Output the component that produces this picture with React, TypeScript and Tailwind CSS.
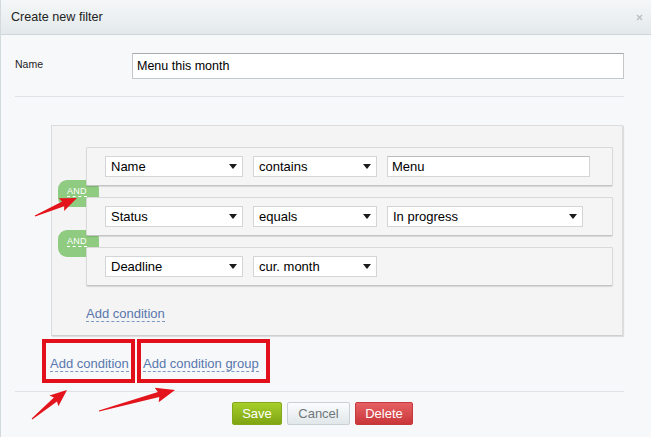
import React from "react";

type P = [number, number];

function arrowPoints(t: P, p: P, L: number, W: number, w0: number, w1: number): string {
  const dx = p[0] - t[0];
  const dy = p[1] - t[1];
  const len = Math.hypot(dx, dy);
  const ux = dx / len;
  const uy = dy / len;
  const nx = -uy;
  const ny = ux;
  const N: P = [p[0] - ux * L, p[1] - uy * L];
  const pts: P[] = [
    [t[0] + (nx * w0) / 2, t[1] + (ny * w0) / 2],
    [N[0] + (nx * w1) / 2, N[1] + (ny * w1) / 2],
    [N[0] - ux * 2 + (nx * W) / 2, N[1] - uy * 2 + (ny * W) / 2],
    p,
    [N[0] - ux * 2 - (nx * W) / 2, N[1] - uy * 2 - (ny * W) / 2],
    [N[0] - (nx * w1) / 2, N[1] - (ny * w1) / 2],
    [t[0] - (nx * w0) / 2, t[1] - (ny * w0) / 2],
  ];
  return pts.map((q) => `${q[0].toFixed(1)},${q[1].toFixed(1)}`).join(" ");
}

function Caret() {
  return (
    <svg width="8" height="5" viewBox="0 0 8 5" className="shrink-0">
      <path d="M0 0 H8 L4 5 Z" fill="#1a1a1a" />
    </svg>
  );
}

function Select({ label, className }: { label: string; className: string }) {
  return (
    <div
      className={
        "flex h-[21px] items-center justify-between border border-[#d3d6d8] bg-white pl-[5px] pr-[5px] text-[13px] leading-none text-black " +
        className
      }
    >
      <span>{label}</span>
      <Caret />
    </div>
  );
}

function TextBox({ value, className }: { value: string; className: string }) {
  return (
    <div
      className={
        "flex h-[21px] items-center border border-[#d3d6d8] border-t-[#b9bdc0] bg-white pl-[4px] text-[13px] leading-none text-black " +
        className
      }
    >
      {value}
    </div>
  );
}

function AndBadge() {
  return (
    <div className="absolute left-[-29px] top-[-18px] -z-10 flex h-[27px] w-[41px] items-start rounded-[9px] bg-[#8fcb80] pl-[9px] pt-[6px]">
      <span className="block w-[20px] border-b border-dashed border-white text-[9px] leading-[10px] tracking-[0.3px] text-white">
        AND
      </span>
    </div>
  );
}

function Row({ children, badge }: { children: React.ReactNode; badge?: boolean }) {
  return (
    <div className="relative flex h-[39px] items-center gap-[10px] rounded-[2px] border border-[#d9d9d9] border-b-[#c4c4c4] bg-[#f5f5f5] pl-[18px] shadow-[0_1px_1px_rgba(0,0,0,0.12)]">
      {badge && <AndBadge />}
      {children}
    </div>
  );
}

function DashLink({ text }: { text: string }) {
  return (
    <span className="block border-b border-dashed border-[#7b98c4] text-[13px] leading-[15px] text-[#5877ad]">
      {text}
    </span>
  );
}

export default function App() {
  return (
    <div className="relative h-[437px] w-[651px] overflow-hidden border-l border-[#d3dadd] bg-[#f7f8fa] font-['Liberation_Sans',Arial,sans-serif]">
      {/* header */}
      <div className="flex h-[35px] items-center justify-between border-b border-[#cfd7da] bg-linear-to-b from-[#f5f7f8] to-[#e3e9eb] pl-[10px] pr-[8px]">
        <span className="text-[12.6px] text-[#222]">Create new filter</span>
        <svg width="7" height="7" viewBox="0 0 7 7">
          <path d="M1 1 L6 6 M6 1 L1 6" stroke="#b9c0c3" strokeWidth="1.4" />
        </svg>
      </div>

      {/* body */}
      <div className="flex flex-col pl-[14px] pr-[27px]">
        <div className="mt-[18px] flex items-center">
          <span className="w-[117px] pb-[3px] text-[10.5px] text-[#222]">Name</span>
          <div className="flex h-[26px] flex-1 items-center border border-[#c3c7ca] border-t-[#a4a9ac] bg-white pl-[4px] text-[12.5px] text-black">
            Menu this month
          </div>
        </div>

        <div className="mt-[17px] h-px bg-[#e0e3e5]" />

        {/* filter group */}
        <div className="relative isolate z-0 ml-[36px] mt-[28px] w-[572px] border border-[#dcdcdc] border-b-[#cfcfcf] bg-[#f4f4f4] pb-[13px] pl-[34px] pr-[9px] pt-[21px] shadow-[1px_1px_1px_rgba(0,0,0,0.1)]">
          <div className="flex flex-col gap-[11px]">
            <Row>
              <Select label="Name" className="w-[138px]" />
              <Select label="contains" className="w-[124px]" />
              <TextBox value="Menu" className="w-[203px]" />
            </Row>
            <Row badge>
              <Select label="Status" className="w-[138px]" />
              <Select label="equals" className="w-[124px]" />
              <Select label="In progress" className="w-[196px]" />
            </Row>
            <Row badge>
              <Select label="Deadline" className="w-[138px]" />
              <Select label="cur. month" className="w-[124px]" />
            </Row>
          </div>
          <div className="mt-[20px] flex items-start">
            <DashLink text="Add condition" />
          </div>
        </div>

        {/* annotated links */}
        <div className="ml-[27px] mt-[3px] flex gap-[2px]">
          <div className="flex h-[44px] w-[93px] items-start border-4 border-[#e2101a] pl-[4px] pt-[13px]">
            <DashLink text="Add condition" />
          </div>
          <div className="flex h-[44px] w-[133px] items-start border-4 border-[#e2101a] pl-[2px] pt-[13px]">
            <DashLink text="Add condition group" />
          </div>
        </div>

        <div className="mt-[8px] h-px bg-[#e0e3e5]" />

        <div className="mt-[10px] flex justify-center gap-[5px] pl-[6px]">
          <button className="flex h-[23px] w-[50px] items-center justify-center rounded-[2px] border border-[#86a81b] bg-linear-to-b from-[#a6cf2a] to-[#7fa513] text-[13px] text-white">
            Save
          </button>
          <button className="flex h-[23px] w-[63px] items-center justify-center rounded-[2px] border border-[#c9d1d5] bg-linear-to-b from-[#fbfcfd] to-[#e1e7ea] text-[13px] text-[#6f777b]">
            Cancel
          </button>
          <button className="flex h-[23px] w-[58px] items-center justify-center rounded-[2px] border border-[#c43a3d] bg-linear-to-b from-[#e66063] to-[#c9363a] text-[13px] text-white">
            Delete
          </button>
        </div>
      </div>

      {/* red annotation arrows */}
      <svg className="pointer-events-none absolute left-[-1px] top-0" width="651" height="437" viewBox="0 0 651 437">
        <polygon points={arrowPoints([35, 216], [77, 198], 15, 14, 1, 5)} fill="#e3141b" />
        <polygon points={arrowPoints([32, 419], [67, 390], 15, 14, 1, 5)} fill="#e3141b" />
        <polygon points={arrowPoints([99, 411], [175, 390], 17, 15, 1, 5)} fill="#e3141b" />
      </svg>
    </div>
  );
}
